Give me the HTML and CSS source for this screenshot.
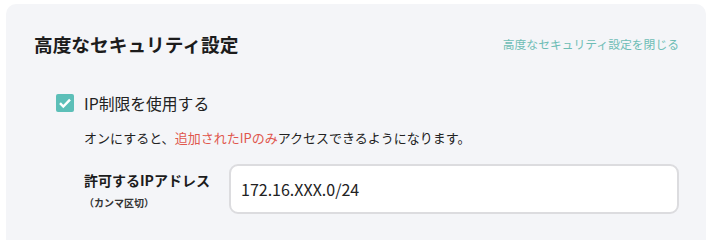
FILE: index.html
```html
<!DOCTYPE html>
<html lang="ja">
<head>
<meta charset="utf-8">
<link rel="stylesheet" href="styles.css">
</head>
<body>
<section class="panel">
  <header class="panel-head">
    <h2 class="title">高度なセキュリティ設定</h2>
    <a class="close-link" href="#">高度なセキュリティ設定を閉じる</a>
  </header>
  <div class="body">
    <label class="check-row">
      <span class="checkbox">
        <svg width="18" height="18" viewBox="0 0 18 18"><rect width="18" height="18" rx="2" fill="#5cbfb8"/><path d="M4 9.2l3.3 3.3L14 5.6" fill="none" stroke="#fff" stroke-width="2.4"/></svg>
      </span>
      <span class="check-label">IP制限を使用する</span>
    </label>
    <p class="desc">オンにすると、<span class="em">追加されたIPのみ</span>アクセスできるようになります。</p>
    <div class="field">
      <div class="field-label">
        <div class="field-name">許可するIPアドレス</div>
        <div class="field-note">（カンマ区切）</div>
      </div>
      <div class="input">172.16.XXX.0/24</div>
    </div>
  </div>
</section>
</body>
</html>
```
FILE: styles.css
```css
html, body { margin: 0; padding: 0; background: #fff; }
body {
  font-family: "Noto Sans CJK JP", "Noto Sans", sans-serif;
  color: #222;
  width: 714px;
  height: 240px;
  overflow: hidden;
}
.panel {
  margin: 4px 8px 0 6px;
  background: #f4f5f8;
  border-radius: 10px 10px 0 0;
  height: 236px;
  padding: 0 27px 0 28px;
}
.panel-head {
  display: flex;
  justify-content: space-between;
  align-items: center;
  height: 78px;
}
.title {
  margin: 0;
  font-size: 18.7px;
  font-weight: 700;
  color: #1c1c1c;
}
.close-link {
  font-size: 11.8px;
  color: #6ebdb5;
  text-decoration: none;
}
.body { padding-left: 22px; }
.check-row {
  display: flex;
  align-items: center;
  gap: 10px;
  height: 20px;
  margin-top: 11px;
}
.checkbox { display: flex; width: 18px; height: 18px; }
.check-label { font-size: 15.8px; color: #222; }
.desc {
  margin: 0;
  padding-left: 28px;
  margin-top: 15px;
  font-size: 13px;
  color: #222;
}
.em { color: #e0574d; }
.field {
  display: flex;
  align-items: center;
  margin-top: 17px;
  padding-left: 28px;
}
.field-label { width: 145px; padding-top: 3px; }
.field-name { font-size: 14px; font-weight: 700; color: #1c1c1c; line-height: 18px; }
.field-note { font-size: 10px; font-weight: 700; color: #333; margin-top: 7px; line-height: 14px; }
.input {
  flex: 1;
  box-sizing: border-box;
  height: 50px;
  border: 2px solid #dcdcdf;
  border-radius: 9px;
  background: #fff;
  display: flex;
  align-items: center;
  padding-left: 10px;
  font-size: 16px;
  color: #222;
}
```
